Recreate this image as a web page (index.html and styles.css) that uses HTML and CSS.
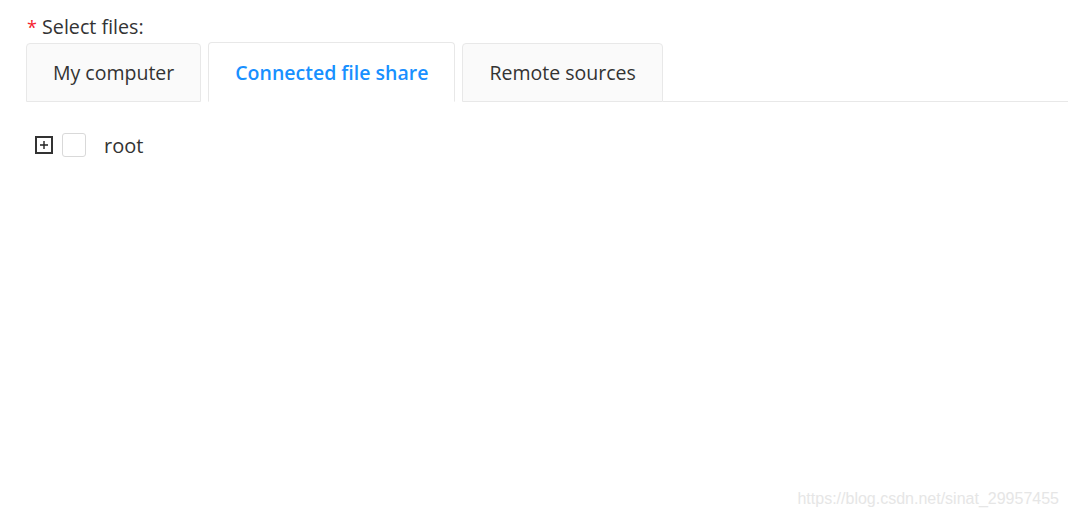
FILE: index.html
```html
<!DOCTYPE html>
<html>
<head>
<meta charset="utf-8">
<link rel="stylesheet" href="styles.css">
</head>
<body>
<div class="page">
  <div class="label"><span class="req">*</span> Select files:</div>
  <div class="tabs">
    <div class="tab">My computer</div>
    <div class="tab active">Connected file share</div>
    <div class="tab">Remote sources</div>
    <div class="tab-rest"></div>
  </div>
  <div class="tree">
    <span class="switcher"><svg width="18" height="18" viewBox="0 0 18 18"><rect x="1" y="1" width="16" height="16" fill="#fff" stroke="#333" stroke-width="2"/><path d="M5 9H13M9 5V13" stroke="#222" stroke-width="1.4"/></svg></span>
    <span class="checkbox"></span>
    <span class="node">root</span>
  </div>
</div>
<div class="watermark">https://blog.csdn.net/sinat_29957455</div>
</body>
</html>
```
FILE: styles.css
```css
html, body { margin: 0; padding: 0; background: #fff; }
body { width: 1068px; height: 517px; position: relative; overflow: hidden; font-family: "Open Sans", "Noto Sans", sans-serif; }
.page { padding: 12px 0 0 26px; }
.label { font-size: 19.7px; line-height: 30px; color: #333; height: 30px; }
.req { color: #f5222d; font-size: 18px; margin-left: 1px; }
.tabs { display: flex; align-items: flex-end; height: 60px; }
.tab { box-sizing: border-box; height: 59px; margin-right: 7px; padding: 0 26px; background: #fafafa; border: 1px solid #e8e8e8; border-radius: 4px 4px 0 0; font-size: 19.5px; line-height: 58px; color: #333; white-space: nowrap; }
.tab.active { background: #fff; color: #1890ff; font-weight: 600; border-bottom-color: #fff; height: 60px; line-height: 60px; }
.tabs .tab:nth-child(3) { margin-right: 0; }
.tab-rest { flex: 1; border-bottom: 1px solid #e8e8e8; }
.tree { display: flex; align-items: center; margin-top: 31px; padding-left: 9px; height: 24px; }
.switcher { display: flex; width: 18px; height: 18px; }
.checkbox { box-sizing: border-box; width: 24px; height: 24px; border: 1px solid #d9d9d9; border-radius: 3px; margin-left: 9px; background: #fff; }
.node { font-size: 20px; color: #333; margin-left: 18px; line-height: 26px; padding-top: 2px; }
.watermark { position: absolute; right: 9px; bottom: 9px; font-family: "Liberation Sans", Arial, sans-serif; font-size: 16px; color: #e6e6e6; }
```
